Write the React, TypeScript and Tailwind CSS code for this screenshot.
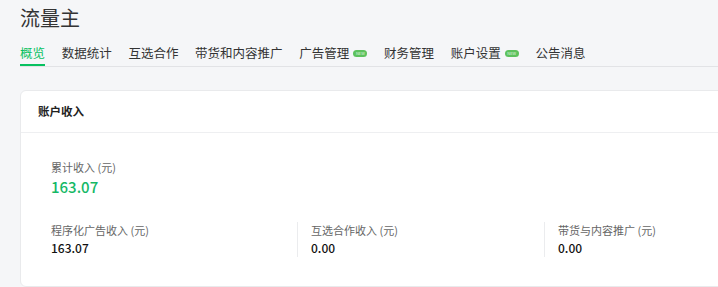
import React from 'react';

const tabs = [
  { label: '概览', active: true },
  { label: '数据统计' },
  { label: '互选合作' },
  { label: '带货和内容推广' },
  { label: '广告管理', badge: true },
  { label: '财务管理' },
  { label: '账户设置', badge: true },
  { label: '公告消息' },
];

const stats = [
  { label: '程序化广告收入 (元)', value: '163.07' },
  { label: '互选合作收入 (元)', value: '0.00' },
  { label: '带货与内容推广 (元)', value: '0.00' },
];

const NewBadge = () => (
  <span className="ml-[4px] inline-flex h-[7px] w-[14px] items-center justify-center rounded-full bg-[#5cc25d] text-[4px] leading-none text-white/80">
    NEW
  </span>
);

const App: React.FC = () => {
  return (
    <div
      className="h-[287px] w-[718px] overflow-hidden bg-[#f5f6f8] text-[#333]"
      style={{ fontFamily: '"Noto Sans CJK SC", "Noto Sans", sans-serif' }}
    >
      {/* Page title */}
      <div className="pl-5 pt-[5px]">
        <h1 className="text-[20px] leading-[26px] font-normal text-[#333]">流量主</h1>
      </div>

      {/* Tabs */}
      <div className="ml-5 mt-[13px] flex border-b border-[#e2e3e6]">
        {tabs.map((t, i) => (
          <div
            key={i}
            className={`mr-[16.7px] flex items-center pb-[2px] border-b-2 ${
              t.active ? 'border-[#07c160] text-[#07c160]' : 'border-transparent text-[#333]'
            }`}
          >
            <span className="text-[12.5px] leading-[18px]">{t.label}</span>
            {t.badge && <NewBadge />}
          </div>
        ))}
      </div>

      {/* Income card */}
      <section className="ml-5 mt-[23px] w-[720px] rounded-md border border-[#e9eaec] bg-white">
        <div className="flex h-[42px] items-center border-b border-[#eeeff1] px-[17px]">
          <h3 className="text-[11.5px] font-semibold text-[#222]">账户收入</h3>
        </div>
        <div className="px-[30px] pt-[26px] pb-[29px]">
          <p className="text-[11px] leading-[16px] text-[#666]">累计收入 (元)</p>
          <p className="mt-[2px] text-[15px] leading-[20px] font-medium text-[#15b866]">163.07</p>

          <div className="mt-[25px] grid grid-cols-[246px_247px_247px]">
            {stats.map((s, i) => (
              <div key={i} className={i === 0 ? '' : 'border-l border-[#ebecee] pl-[13px]'}>
                <p className="text-[11px] leading-[16px] text-[#666]">{s.label}</p>
                <p className="mt-px text-[12px] leading-[18px] font-medium text-[#111]">{s.value}</p>
              </div>
            ))}
          </div>
        </div>
      </section>
    </div>
  );
};

export default App;
